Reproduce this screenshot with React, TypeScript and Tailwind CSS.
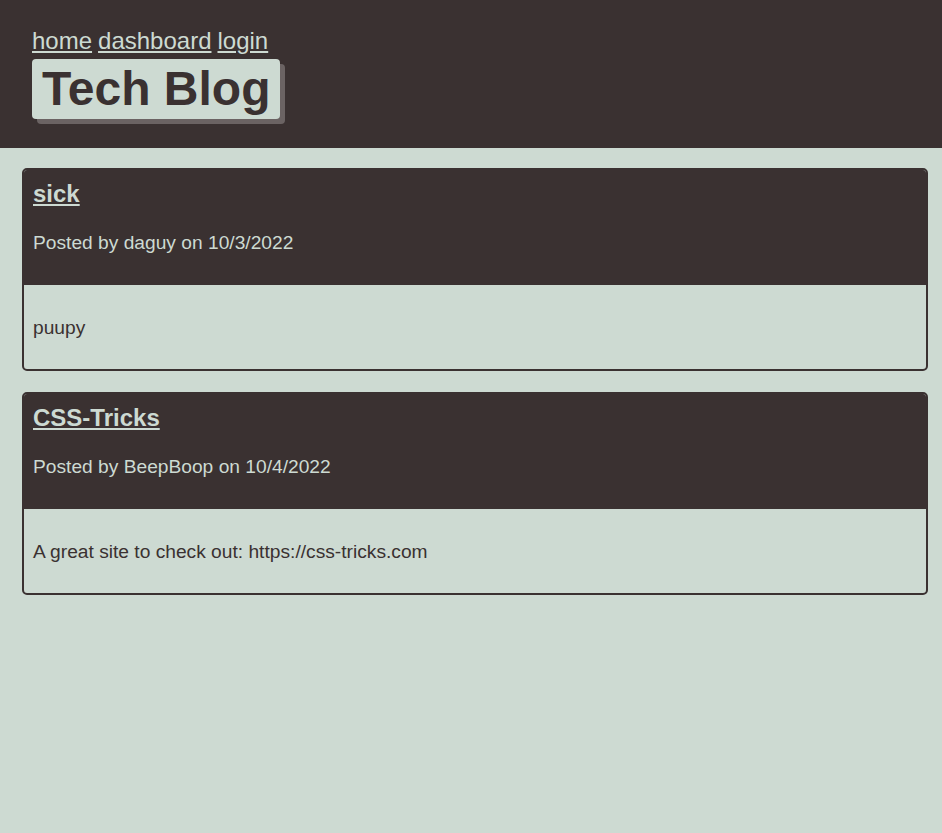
import React from 'react';

const posts = [
  { title: 'sick', author: 'daguy', date: '10/3/2022', body: 'puupy' },
  {
    title: 'CSS-Tricks',
    author: 'BeepBoop',
    date: '10/4/2022',
    body: 'A great site to check out: https://css-tricks.com',
  },
];

export default function App() {
  return (
    <div className="min-h-[833px] bg-[#cddad2] font-['Liberation_Sans',Arial,sans-serif] text-[#3a3131]">
      <header className="h-[148px] bg-[#3a3131] px-[32px] pt-[27px]">
        <nav className="flex gap-[6px] text-[24px] leading-[28px] text-[#cddad2]">
          <a href="#" className="underline">home</a>
          <a href="#" className="underline">dashboard</a>
          <a href="#" className="underline">login</a>
        </nav>
        <h1 className="mt-[4px] inline-block rounded-[4px] bg-[#cddad2] px-[10px] text-[48px] font-bold leading-[60px] text-[#3a3131] shadow-[5px_5px_0_#6b6363]">
          Tech Blog
        </h1>
      </header>
      <main className="ml-[22px] mr-[14px] flex flex-col gap-[21px] pt-[20px]">
        {posts.map((p) => (
          <section key={p.title} className="overflow-hidden rounded-[5px] border-2 border-[#3a3131]">
            <div className="bg-[#3a3131] px-[9px] pt-[10px] pb-[31px] text-[#cddad2]">
              <h2 className="text-[24px] font-bold leading-[28px]">
                <a href="#" className="underline">{p.title}</a>
              </h2>
              <p className="mt-[24px] text-[19.2px] leading-[22px]">
                Posted by {p.author} on {p.date}
              </p>
            </div>
            <div className="px-[9px] pt-[32px] pb-[30px]">
              <p className="text-[19.2px] leading-[22px]">{p.body}</p>
            </div>
          </section>
        ))}
      </main>
    </div>
  );
}
